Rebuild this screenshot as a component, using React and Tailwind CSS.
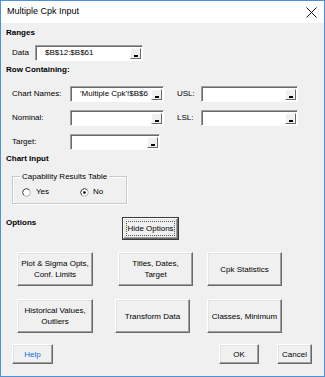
const raised =
  "bg-[#f0f0f0] border border-t-white border-l-white border-r-[#696969] border-b-[#696969] shadow-[inset_-1px_-1px_0_#a0a0a0,inset_1px_1px_0_#e3e3e3]";

function PickButton() {
  return (
    <div className="ml-auto mr-[1px] w-[11px] h-[11px] bg-[#f0f0f0] border border-t-white border-l-white border-r-[#696969] border-b-[#696969] flex items-end justify-center pb-[1px]">
      <div className="w-[4px] h-[2px] bg-black" />
    </div>
  );
}

function RefEdit({ value = "", width }) {
  return (
    <div
      className="h-[16px] bg-white border border-t-[#a0a0a0] border-l-[#a0a0a0] border-r-white border-b-white shadow-[inset_1px_1px_0_#696969] flex items-center pl-[9px]"
      style={{ width }}
    >
      <span className="leading-none whitespace-nowrap">{value}</span>
      <PickButton />
    </div>
  );
}

function Radio({ checked }) {
  return (
    <svg width="9" height="9" viewBox="0 0 9 9">
      <circle cx="4.5" cy="4.5" r="3.8" fill="white" stroke="#b0b0b0" />
      <path d="M1.8 7.2 A3.8 3.8 0 0 1 7.2 1.8" fill="none" stroke="#555" />
      {checked && <circle cx="4.5" cy="4.5" r="1.3" fill="black" />}
    </svg>
  );
}

function Btn({ children, className = "", w }) {
  return (
    <div
      className={`${raised} flex items-center justify-center text-center leading-[11px] ${className}`}
      style={{ width: w }}
    >
      {children}
    </div>
  );
}

export default function App() {
  return (
    <div className="w-[325px] h-[377px] border border-[#4f91d6] bg-[#f0f0f0] flex flex-col font-['Liberation_Sans',Arial,sans-serif] text-[8px] text-black">
      <div className="h-[22px] bg-white flex items-center justify-between pl-[6px] pr-[6px]">
        <span className="text-[9px]">Multiple Cpk Input</span>
        <svg width="11" height="11" viewBox="0 0 11 11" className="mr-[1px]">
          <path d="M0.5 0.5 L10.5 10.5 M10.5 0.5 L0.5 10.5" stroke="#111" strokeWidth="1" />
        </svg>
      </div>

      <div className="flex flex-col pl-[5px]">
        <div className="h-[20px] flex items-center font-bold">Ranges</div>
        <div className="mt-[2px] flex items-center">
          <span className="ml-[6px] w-[23px]">Data</span>
          <RefEdit value="$B$12:$B$61" width={108} />
        </div>

        <div className="h-[18px] flex items-center font-bold">Row Containing:</div>
        <div className="mt-[7px] flex items-center">
          <span className="ml-[6px] w-[58px]">Chart Names:</span>
          <RefEdit value="'Multiple Cpk'!$B$6" width={94} />
          <span className="ml-[13px] w-[24px]">USL:</span>
          <RefEdit width={97} />
        </div>
        <div className="mt-[8px] flex items-center">
          <span className="ml-[6px] w-[58px]">Nominal:</span>
          <RefEdit width={94} />
          <span className="ml-[13px] w-[24px]">LSL:</span>
          <RefEdit width={97} />
        </div>
        <div className="mt-[8px] flex items-center">
          <span className="ml-[6px] w-[58px]">Target:</span>
          <RefEdit width={90} />
        </div>

        <div className="h-[18px] flex items-center font-bold">Chart Input</div>
        <div className="relative mt-[8px] ml-[6px] w-[115px] h-[28px] border border-[#c8c8c8] shadow-[inset_1px_1px_0_white,1px_1px_0_white] pt-[8px] pl-[9px] flex items-start">
          <span className="absolute left-[7px] top-[-6px] bg-[#f0f0f0] px-[2px] leading-[11px]">
            Capability Results Table
          </span>
          <div className="flex items-center h-[14px]">
            <Radio />
            <span className="ml-[5px]">Yes</span>
          </div>
          <div className="flex items-center h-[14px] ml-[31px]">
            <Radio checked />
            <span className="ml-[4px]">No</span>
          </div>
        </div>

        <div className="mt-[13px] flex items-start">
          <span className="w-[116px] font-bold leading-[11px]">Options</span>
          <div className="w-[57px] h-[23px] border border-[#3a3a3a] flex">
            <div className={`${raised} flex-1 flex items-center justify-center p-[2px]`}>
              <span className="w-full h-full border border-dotted border-[#555] flex items-center justify-center leading-none">
                Hide Options
              </span>
            </div>
          </div>
        </div>

        <div className="mt-[12px] flex h-[34px]">
          <Btn className="ml-[11px]" w={76}>Plot &amp; Sigma Opts,<br />Conf. Limits</Btn>
          <Btn className="ml-[25px]" w={75}>Titles, Dates,<br />Target</Btn>
          <Btn className="ml-[14px]" w={75}>Cpk Statistics</Btn>
        </div>
        <div className="mt-[13px] flex h-[34px]">
          <Btn className="ml-[11px]" w={76}>Historical Values,<br />Outliers</Btn>
          <Btn className="ml-[22px]" w={75}>Transform Data</Btn>
          <Btn className="ml-[17px]" w={75}>Classes, Minimum</Btn>
        </div>

        <div className="mt-[11px] flex h-[20px]">
          <Btn className="ml-[6px] text-[#0f6fe0]" w={41}>Help</Btn>
          <Btn className="ml-[166px]" w={40}>OK</Btn>
          <Btn className="ml-[18px]" w={35}>Cancel</Btn>
        </div>
      </div>
    </div>
  );
}
